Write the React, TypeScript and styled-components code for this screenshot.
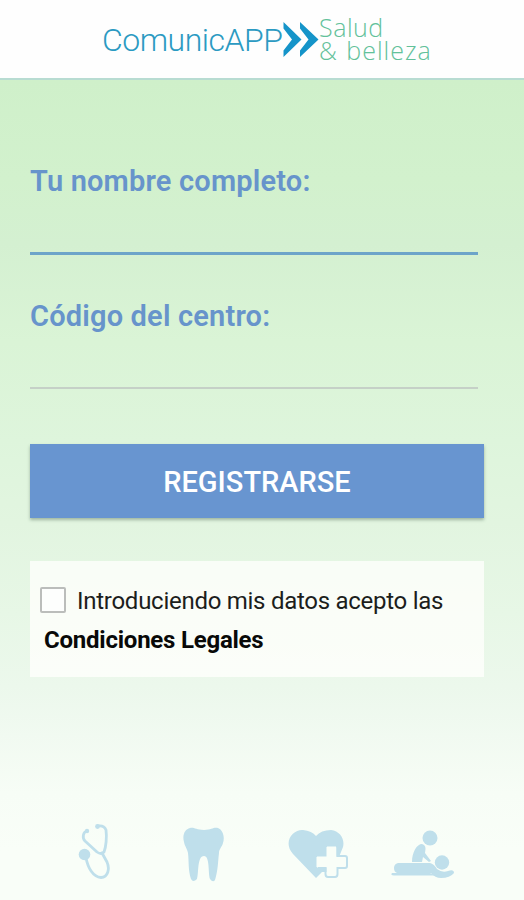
import React from "react";
import styled, { createGlobalStyle } from "styled-components";

const GlobalStyle = createGlobalStyle`
  * { box-sizing: border-box; }
  body { margin: 0; font-family: Roboto, "Liberation Sans", sans-serif; }
`;

const Screen = styled.div`
  width: 524px;
  height: 900px;
  display: flex;
  flex-direction: column;
  overflow: hidden;
  background: #f9fef8;
`;

const Header = styled.header`
  height: 80px;
  flex: none;
  display: flex;
  align-items: flex-start;
  padding-left: 102px;
  background: #fefefe;
  border-bottom: 2px solid #b8dcd2;
  white-space: nowrap;
`;

const Brand = styled.span`
  width: 181px;
  padding-top: 20px;
  font-size: 32px;
  line-height: 40px;
  font-weight: 300;
  letter-spacing: -0.5px;
  color: #2b9ac2;
`;

const Chevrons = styled.svg`
  width: 36px;
  height: 36px;
  margin-top: 22px;
  flex: none;
`;

const Tagline = styled.div`
  display: flex;
  flex-direction: column;
  padding-top: 16px;
  font-family: "Open Sans", "Noto Sans", sans-serif;
  font-weight: 300;
  font-size: 25px;
  line-height: 23px;
  color: #62c19a;
`;

const TaglineRow = styled.span<{ $spacing: number }>`
  letter-spacing: ${(p) => p.$spacing}px;
  word-spacing: 1px;
`;

const Content = styled.main`
  flex: 1;
  display: flex;
  flex-direction: column;
  padding: 82px 40px 0 30px;
  background: linear-gradient(
    to bottom,
    #cff0ca 0%,
    #d2f1cd 12%,
    #d4f0d1 20%,
    #daf4d6 32%,
    #def5dc 44%,
    #e2f5e0 54%,
    #e7f7e6 65%,
    #ecf8ec 74%,
    #f1faf1 80%,
    #f7fdf6 87%,
    #f9fef8 94%
  );
`;

const Field = styled.label`
  display: flex;
  flex-direction: column;
  width: 448px;
`;

const FieldLabel = styled.span`
  font-size: 29px;
  line-height: 38px;
  font-weight: 600;
  letter-spacing: 0.18px;
  color: #6794cb;
`;

const TextInput = styled.input<{ $active?: boolean }>`
  height: ${(p) => (p.$active ? 55 : 54)}px;
  padding: 0;
  border: 0;
  outline: 0;
  border-bottom: ${(p) => (p.$active ? "3px solid #6da4c9" : "2px solid #c5d0c7")};
  background: transparent;
  font: 24px Roboto, sans-serif;
  margin-bottom: ${(p) => (p.$active ? 42 : 55)}px;
`;

const SubmitButton = styled.button`
  height: 74px;
  width: 454px;
  flex: none;
  padding: 3px 0 0;
  border: 0;
  background: #6895d0;
  color: #fff;
  font: 500 29px/71px Roboto, sans-serif;
  letter-spacing: 0;
  box-shadow: 0 2px 3px rgba(60, 90, 70, 0.4);
`;

const Legal = styled.section`
  width: 454px;
  height: 116px;
  flex: none;
  margin-top: 43px;
  padding: 19px 0 0 10px;
  background: rgba(255, 255, 252, 0.78);
  color: #1c1e1c;
  white-space: nowrap;
`;

const Consent = styled.label`
  display: flex;
  align-items: center;
  height: 41px;
  font-size: 24px;
  letter-spacing: -0.27px;
`;

const Checkbox = styled.input`
  appearance: none;
  width: 26px;
  height: 26px;
  margin: 0 11px 2px 0;
  border: 2px solid #bbbdbb;
  border-radius: 2px;
  background: #fdfefd;
`;

const LegalLink = styled.a`
  display: block;
  padding-left: 4px;
  font-size: 24px;
  line-height: 38px;
  font-weight: 700;
  letter-spacing: -0.23px;
  color: #080908;
`;

const Services = styled.footer`
  display: flex;
  margin: auto 0 18px 48px;
  flex: none;
`;

const ServiceIcon = styled.svg<{ $w: number; $gap: number }>`
  width: ${(p) => p.$w}px;
  height: 60px;
  margin-right: ${(p) => p.$gap}px;
  flex: none;
  color: #bfdfeb;
  fill: currentColor;
`;

export default function App() {
  return (
    <>
      <GlobalStyle />
      <Screen>
        <Header>
          <Brand>ComunicAPP</Brand>
          <Chevrons viewBox="0 0 36 36" fill="#1594c9">
            <path d="M0.5 0L18.5 17.5L0.5 35V28.5L9 17.5L0.5 6.5Z" />
            <path d="M17 0L35.5 17.5L17 35V28.5L25.5 17.5L17 6.5Z" />
          </Chevrons>
          <Tagline>
            <TaglineRow $spacing={0.5}>Salud</TaglineRow>
            <TaglineRow $spacing={1}>&amp; belleza</TaglineRow>
          </Tagline>
        </Header>
        <Content>
          <Field>
            <FieldLabel>Tu nombre completo:</FieldLabel>
            <TextInput $active />
          </Field>
          <Field>
            <FieldLabel>Código del centro:</FieldLabel>
            <TextInput />
          </Field>
          <SubmitButton>REGISTRARSE</SubmitButton>
          <Legal>
            <Consent>
              <Checkbox type="checkbox" />
              Introduciendo mis datos acepto las
            </Consent>
            <LegalLink>Condiciones Legales</LegalLink>
          </Legal>
          <Services>
            <ServiceIcon $w={32} $gap={73} viewBox="78 822 32 60">
              <g fill="none" stroke="currentColor" strokeWidth="2.800" strokeLinecap="round" strokeLinejoin="round">
                <path d="M87 831C83 832 82 838 85 841L97 852Q101 855 104 852C106 847 107 837 106 830Q104 825 98 826" />
                <path d="M86 858C88 868 93 877 101 877.500C108 877 110 869 107 862L102 853" />
              </g>
              <circle cx="84.500" cy="854.500" r="5.800" />
              <circle cx="87" cy="831" r="2.200" />
              <circle cx="97.500" cy="826.500" r="2.400" />
            </ServiceIcon>
            <ServiceIcon $w={42} $gap={63} viewBox="183 822 42 60">
              <path d="M190 828C194 827 196 830 204 830C212 830 213 827 218 828C223 830 225 837 223 843C222 847 219 849 219 853C218 861 218 871 215 880Q213 883 210 879C208 873 210 856 204 856C197 856 199 873 197 879Q193 883 191 879C188 870 189 861 188 853C187 848 185 847 184 842C182 835 185 829 190 828Z" />
            </ServiceIcon>
            <ServiceIcon $w={61} $gap={41} viewBox="288 822 61 60">
              <path d="M316 878L293 854C282 841 294 829 303 830Q312 831 316 836Q321 830 331 830C340 831 345 839 343 847L333 872L322 872Z" />
              <path d="M327 847H336V857H346V867H336V876H327V867H317V857H327Z" fill="#f9fef8" stroke="#f9fef8" strokeWidth="1" />
              <path d="M336 846Q337.500 846 337.500 848V856H345Q347 856 347 858V866Q347 868 345 868H337.500V874Q337.500 877 335 877H328Q325.500 877 325.500 874V868H318" fill="none" stroke="currentColor" strokeWidth="2" />
            </ServiceIcon>
            <ServiceIcon $w={66} $gap={0} viewBox="390 822 66 60">
              <circle cx="430" cy="838" r="7.500" />
              <circle cx="442" cy="862.500" r="7.200" />
              <path d="M412 862C412 852 417 844 422 844Q427 845 425 853L431 861L429 862L423 857L422 862Z" />
              <path d="M398 863H430Q434 864 437 869Q442 873 448 871Q454 869 454 873Q450 878 441 878Q435 878 431 873H397Q394 872 394 868Q394 864 398 863Z" />
              <path d="M392 873H430L436 875.500H394Q390 875 392 873Z" />
            </ServiceIcon>
          </Services>
        </Content>
      </Screen>
    </>
  );
}
